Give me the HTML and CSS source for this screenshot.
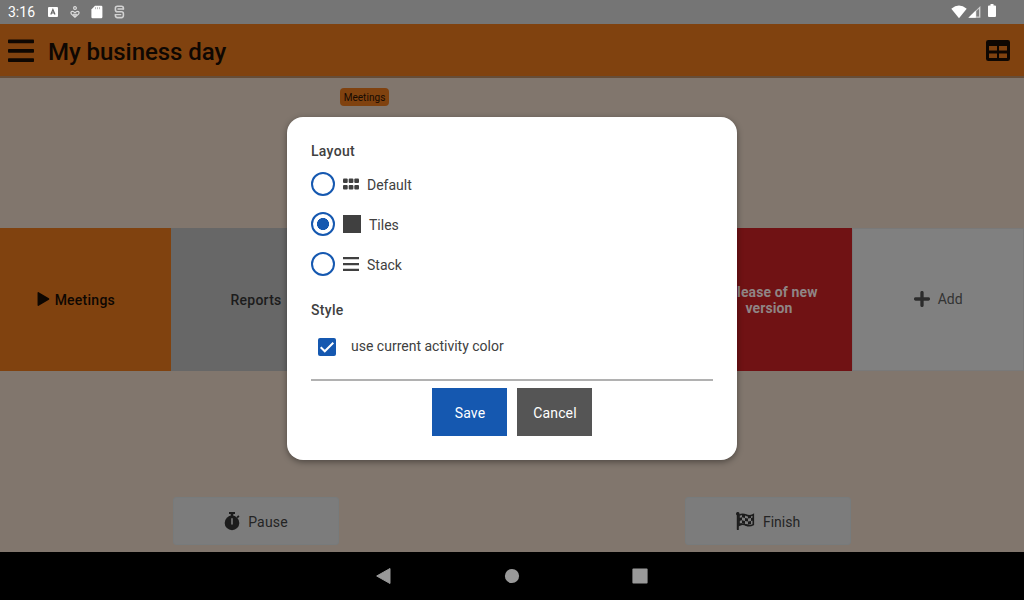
FILE: index.html
```html
<!DOCTYPE html>
<html lang="en">
<head>
<meta charset="utf-8">
<title>My business day</title>
<link rel="stylesheet" href="styles.css">
</head>
<body>
<div class="screen">
  <div class="status">
    <span class="time">3:16</span>
    <svg class="s-a" width="10" height="10" viewBox="0 0 10 10"><rect width="10" height="10" rx="1" fill="#fff"/><path d="M2.800 7.600 4.900 2.600 7 7.600M3.600 6h2.600" fill="none" stroke="#666" stroke-width="1.200"/></svg>
    <svg class="s-p" width="10" height="12" viewBox="0 0 10 12" fill="none" stroke="#dedede" stroke-width="1.200"><circle cx="5" cy="2.100" r="1.400"/><path d="M5 11.200 1.300 7.900Q.300 5.700 2.200 5.300Q3.700 5.200 5 6.900Q6.300 5.200 7.800 5.300Q9.700 5.700 8.700 7.900zM3.300 8 5 9.300 6.700 8"/></svg>
    <svg class="s-sd" width="12" height="14" viewBox="0 0 12 14"><path d="M4 .8h6.200q1.200 0 1.200 1.200v10q0 1.200-1.200 1.200H1.600Q.4 13.200.4 12V4.400z" fill="#fff"/><path d="M4.500 2.200v2M6.500 2.200v2M8.500 2.200v2" stroke="#bbb"/></svg>
    <svg class="s-s" width="11" height="14" viewBox="0 0 11 14" fill="none" stroke="#d2d2d2"><path d="M9.400 4.500V3.200Q9.400 1.200 7.400 1.200H3.400Q1.400 1.200 1.400 3.200V4.800Q1.400 6.800 3.400 6.800H7.400Q9.400 6.800 9.400 8.800V10.600Q9.400 12.600 7.400 12.600H3.400Q1.400 12.600 1.400 10.600V9.300" stroke-width="1.600"/><path d="M3.500 4H9.900M.900 9.700H7.300" stroke-width="1.300"/></svg>
    <span class="grow"></span>
    <svg class="s-w" width="16" height="14" viewBox="0 0 16 14"><path d="M.3 3.800Q8-2.700 15.700 3.800L8 13.200z" fill="#fff"/></svg>
    <svg class="s-c" width="13" height="12" viewBox="0 0 13 12"><path d="M12.400 0V11.800H.4z" fill="#d0d0d0"/><path d="M7.800 4.600V11.800H.4z" fill="#fff"/><path d="M8.300 5.300 11 2.700V10.500H8.300z" fill="#808080"/></svg>
    <svg class="s-b" width="8" height="14" viewBox="0 0 8 14"><path d="M2.500 0h3v1.400H7q1 0 1 1V12q0 1-1 1H1q-1 0-1-1V2.400q0-1 1-1h1.500z" fill="#fff"/></svg>
  </div>
  <header class="toolbar">
    <svg class="menu" width="26" height="24" viewBox="0 0 26 24" fill="#0e0702"><rect y=".4" width="26" height="3.800" rx=".8"/><rect y="9.900" width="26" height="3.800" rx=".8"/><rect y="19.200" width="26" height="3.800" rx=".8"/></svg>
    <h1>My business day</h1>
    <svg class="table" width="24" height="22" viewBox="0 0 24 22"><path fill-rule="evenodd" d="M2.300 0h19.400Q24 0 24 2.300v16.400Q24 21 21.700 21H2.300Q0 21 0 18.700V2.300Q0 0 2.300 0zM3 6v4.500h8V6zm10 0v4.500h8V6zM3 13.500V18h8v-4.500zm10 0V18h8v-4.500z" fill="#0e0702"/></svg>
  </header>
  <main class="content">
    <div class="timeline"><span class="tag">Meetings</span></div>
    <div class="tiles">
      <div class="tile orange"><svg class="play" width="13" height="16" viewBox="0 0 13 16"><path d="M1.300 1.800 11.500 8 1.300 14.200z" fill="#0e0702" stroke="#0e0702" stroke-width="1.500" stroke-linejoin="round"/></svg><span>Meetings</span></div>
      <div class="tile gray"><span>Reports</span></div>
      <div class="tile gray"></div>
      <div class="tile gray"></div>
      <div class="tile red"><span>Release of new version</span></div>
      <div class="tile add"><svg width="16" height="16" viewBox="0 0 16 16"><path d="M8 1.600V14.400M1.600 8H14.400" stroke="#2c2c2c" stroke-width="3.300" stroke-linecap="round"/></svg><span>Add</span></div>
    </div>
    <div class="actions">
      <div class="action pause"><svg width="16" height="19" viewBox="0 0 16 19"><path d="M5 0h6v2H9.300v2h-2.600V2H5z" fill="#1c1c1c"/><path d="m12.500 5 1.700-1.700 1.300 1.300-1.700 1.700z" fill="#1c1c1c"/><circle cx="8" cy="10.900" r="7.300" fill="#1c1c1c"/><path d="M8 7v4.800" stroke="#707070" stroke-width="1.800" stroke-linecap="round"/></svg><span>Pause</span></div>
      <div class="action finish"><svg width="19" height="18" viewBox="0 0 19 18"><path d="M1.800 1.300V17.300" stroke="#1c1c1c" stroke-width="2" stroke-linecap="round"/><circle cx="1.800" cy="1.800" r="1.800" fill="#1c1c1c"/><path d="M3 3.200Q6.500 1.300 10 3T17.300 2.600V12.600Q13.500 14.700 10 13T3 13.200z" fill="none" stroke="#1c1c1c" stroke-width="1.600"/><path d="M6 2.200 9 3v3L6 5.300zM12 3.400l3-.3v3l-3 .5zM3 6l3-.7v3L3 9zM9 6l3 .6v3L9 8.900zM15 6.100l2.400-.6v3L15 9.100zM6 8.300l3 .6v3L6 11.300zM12 9.600l3-.5v3l-3 .6zM3 11.500l3-.5v2l-3 .5zM9 11.900l3 .6v1.500l-3-.6z" fill="#1c1c1c"/></svg><span>Finish</span></div>
    </div>
  </main>
  <nav class="navbar">
    <svg width="16" height="18" viewBox="0 0 16 18"><path d="M14 1.500v15L.700 9z" fill="#999" stroke="#999" stroke-linejoin="round"/></svg>
    <svg width="16" height="16" viewBox="0 0 16 16"><circle cx="8" cy="8" r="7.100" fill="#999"/></svg>
    <svg width="16" height="16" viewBox="0 0 16 16"><rect x=".4" y=".4" width="15.200" height="15.200" rx="1" fill="#999"/></svg>
  </nav>
  <div class="dialog">
    <h2>Layout</h2>
    <div class="option"><i class="radio"></i><svg width="16" height="12" viewBox="0 0 16 12" fill="#404040"><rect y=".5" width="4.700" height="4.500" rx="1"/><rect x="5.700" y=".5" width="4.700" height="4.500" rx="1"/><rect x="11.300" y=".5" width="4.700" height="4.500" rx="1"/><rect y="7" width="4.700" height="4.500" rx="1"/><rect x="5.700" y="7" width="4.700" height="4.500" rx="1"/><rect x="11.300" y="7" width="4.700" height="4.500" rx="1"/></svg><span>Default</span></div>
    <div class="option"><i class="radio checked"></i><svg width="18" height="18" viewBox="0 0 18 18"><rect width="18" height="18" fill="#404040"/></svg><span>Tiles</span></div>
    <div class="option"><i class="radio"></i><svg width="16" height="14" viewBox="0 0 16 14"><path d="M0 1.200h16M0 7.200h16M0 13h16" stroke="#404040" stroke-width="2.300"/></svg><span>Stack</span></div>
    <h2 class="style-title">Style</h2>
    <div class="checkline"><svg width="18" height="18" viewBox="0 0 18 18"><rect width="18" height="18" rx="2" fill="#1558b0"/><path d="m2.700 9.200 4.100 4.100 8.500-8.500" fill="none" stroke="#fff" stroke-width="2"/></svg><span>use current activity color</span></div>
    <div class="buttons"><button class="save">Save</button><button class="cancel">Cancel</button></div>
  </div>
</div>
</body>
</html>
```
FILE: styles.css
```css
* { box-sizing: border-box; }
body { margin: 0; font: 14px/16px Roboto, sans-serif; }
svg { display: block; flex: none; }
.screen { position: relative; width: 1024px; height: 600px; display: flex; flex-direction: column; overflow: hidden; background: #81766d; }
.status { height: 24px; display: flex; align-items: flex-start; background: #757575; color: #fff; padding: 0 27px 0 8px; }
.time { width: 40px; line-height: 25px; }
.s-a { margin-top: 7px; }
.s-p { margin: 6px 0 0 12px; }
.s-sd { margin: 5px 0 0 11px; }
.s-s { margin: 5px 0 0 11px; }
.grow { flex: 1; }
.s-w { margin-top: 5px; }
.s-c { margin: 6px 0 0 1px; }
.s-b { margin: 4px 1px 0 7px; }
.toolbar { height: 54px; display: flex; align-items: flex-start; padding: 0 14px 0 8px; background: #80420f; border-bottom: 2px solid #664d38; }
.menu { margin-top: 15px; }
.toolbar h1 { flex: 1; margin: 14px 0 0 14px; font-size: 24px; line-height: 28px; font-weight: 500; letter-spacing: -.05px; color: #0e0702; }
.table { margin-top: 16px; }
.content { height: 474px; display: flex; flex-direction: column; }
.timeline { height: 150px; padding: 10px 0 0 340px; }
.tag { display: block; width: 49px; height: 18px; border-radius: 4px; background: #80420f; color: #160a02; font-size: 10px; line-height: 19px; text-align: center; letter-spacing: .05px; }
.tiles { height: 143px; display: grid; grid-template-columns: repeat(6, 1fr); }
.tile { display: flex; align-items: center; justify-content: center; text-align: center; font-weight: 500; letter-spacing: .25px; padding-top: 1px; }
.orange { background: #80420f; color: #0e0702; padding-right: 19px; }
.play { margin: -3px 5px 0 0; }
.gray { background: #676767; color: #1c1c1c; }
.red { background: #701214; color: #8f8585; font-weight: 700; letter-spacing: .12px; padding: 1px 33px 0 34px; }
.red span { margin-right: -1px; }
.add { background: #808080; color: #333; font-weight: 400; letter-spacing: 0; gap: 8px; border: 1px solid #797979; margin-left: -1px; padding: 0 0 1px; }
.actions { flex: 1; display: grid; grid-template-columns: 1fr 1fr; justify-items: center; padding-top: 126px; }
.action { width: 166px; height: 48px; display: flex; align-items: center; justify-content: center; background: #7c7c7c; border: 1px solid #777b7c; border-radius: 3px; color: #242424; padding-top: 2px; }
.action svg { margin: -3px 8px 0 0; }
.pause svg { margin-top: -2px; }
.pause { letter-spacing: .2px; }
.navbar { height: 48px; display: flex; align-items: center; justify-content: center; gap: 112px; background: #000; }
.dialog { position: absolute; left: 287px; top: 117px; width: 450px; height: 343px; padding: 26px 24px 0; background: #fff; border-radius: 16px; box-shadow: 0 2px 6px rgba(0,0,0,.4); color: #404040; }
.dialog h2 { margin: 0 0 4px; font-size: 14px; line-height: 17px; font-weight: 500; letter-spacing: .3px; }
.option { height: 40px; display: flex; align-items: center; }
.option span { margin-left: 8px; padding-top: 2px; }
.radio { width: 24px; height: 24px; margin-right: 8px; border: 2px solid #1558b0; border-radius: 50%; }
.checked { background: radial-gradient(circle, #1558b0 5.7px, #fff 6.3px); }
.dialog .style-title { margin-top: 18px; }
.checkline { display: flex; align-items: center; height: 40px; padding: 7px 0 0 7px; }
.checkline span { margin: -1px 0 0 15px; }
.buttons { display: flex; justify-content: center; gap: 10px; margin-top: 16px; padding-top: 7px; border-top: 2px solid #b1b1b1; }
.buttons button { width: 75px; height: 48px; border: 0; padding: 2px 0 0 1px; font: 14px Roboto, sans-serif; letter-spacing: .15px; color: #fff; }
.buttons .save { background: #1558b0; }
.buttons .cancel { background: #555; }
```
